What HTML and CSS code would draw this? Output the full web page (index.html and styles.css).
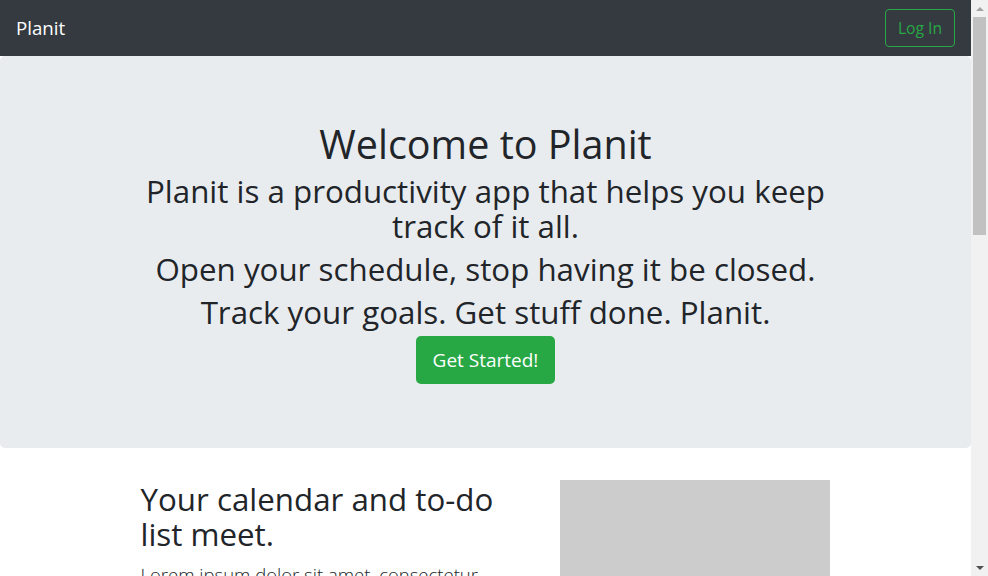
FILE: index.html
```html
<!DOCTYPE html>
<html lang="en">
<head>
<meta charset="utf-8">
<title>Planit</title>
<link rel="stylesheet" href="styles.css">
</head>
<body>
<div class="window">
  <div class="page">
    <nav class="navbar">
      <a class="brand" href="#">Planit</a>
      <a class="btn-outline" href="#">Log In</a>
    </nav>
    <section class="jumbotron">
      <h1 class="title">Welcome to Planit</h1>
      <h2 class="sub">Planit is a productivity app that helps you keep track of it all.</h2>
      <h2 class="sub">Open your schedule, stop having it be closed.</h2>
      <h2 class="sub">Track your goals. Get stuff done. Planit.</h2>
      <a class="btn-lg" href="#">Get Started!</a>
    </section>
    <div class="container">
      <div class="row">
        <div class="col-left">
          <h2 class="feature-heading">Your calendar and to-do list meet.</h2>
          <p class="lead">Lorem ipsum dolor sit amet, consectetur adipiscing elit, sed do eiusmod tempor incididunt ut labore et dolore magna aliqua.</p>
        </div>
        <div class="col-right">
          <div class="placeholder"></div>
        </div>
      </div>
    </div>
  </div>
  <div class="scrollbar">
    <div class="sb-btn"><span class="arrow-up"></span></div>
    <div class="sb-track"><div class="sb-thumb"></div></div>
    <div class="sb-btn"><span class="arrow-down"></span></div>
  </div>
</div>
</body>
</html>
```
FILE: styles.css
```css
html, body {
  margin: 0;
  padding: 0;
  height: 100%;
  overflow: hidden;
}
body {
  font-family: "Open Sans", "Noto Sans", sans-serif;
  color: #212529;
  background: #fff;
  font-size: 16px;
  line-height: 1.5;
}
.window {
  display: flex;
  height: 576px;
  width: 988px;
}
.page {
  flex: 1;
  min-width: 0;
  overflow: hidden;
}
.navbar {
  background: #343a40;
  height: 56px;
  box-sizing: border-box;
  padding: 0 16px;
  display: flex;
  align-items: center;
  justify-content: space-between;
}
.brand {
  color: #fff;
  text-decoration: none;
  font-size: 18.7px;
  line-height: 30px;
}
.btn-outline {
  color: #28a745;
  border: 1px solid #28a745;
  border-radius: 4px;
  text-decoration: none;
  font-size: 15.7px;
  line-height: 24px;
  padding: 6px 0;
  width: 70px;
  box-sizing: border-box;
  white-space: nowrap;
  text-align: center;
}
.jumbotron {
  background: #e9ecef;
  border-radius: 5px;
  padding: 64px 32px;
  margin-bottom: 32px;
  text-align: center;
  height: 392px;
  box-sizing: border-box;
}
.title {
  font-size: 39.5px;
  font-weight: 400;
  line-height: 48px;
  margin: 0 0 6px;
}
.sub {
  font-size: 31.3px;
  font-weight: 400;
  line-height: 35px;
  margin: 0 auto 8px;
  max-width: 690px;
}
.btn-lg {
  display: inline-block;
  background: #28a745;
  color: #fff;
  text-decoration: none;
  font-size: 19px;
  line-height: 30px;
  padding: 9px 17px;
  border-radius: 5px;
  margin-top: -2px;
}
.container {
  width: 720px;
  margin: 0 auto;
  padding: 0 15px;
  box-sizing: border-box;
}
.row {
  display: flex;
  margin: 0 -15px;
}
.col-left {
  flex: 0 0 58.3333%;
  padding: 0 15px;
  box-sizing: border-box;
}
.col-right {
  flex: 0 0 41.6667%;
  padding: 0 15px;
  box-sizing: border-box;
  display: flex;
  justify-content: flex-end;
}
.feature-heading {
  font-size: 31.3px;
  font-weight: 400;
  line-height: 35px;
  margin: 2px 0 8px;
}
.lead {
  font-size: 18.5px;
  font-weight: 300;
  line-height: 30px;
  margin: 0;
}
.placeholder {
  width: 270px;
  height: 270px;
  background: #cccccc;
}
.scrollbar {
  width: 17px;
  background: #f1f1f1;
  display: flex;
  flex-direction: column;
}
.sb-btn {
  height: 17px;
  display: flex;
  align-items: center;
  justify-content: center;
}
.sb-track {
  flex: 1;
}
.sb-thumb {
  margin: 0 2px;
  height: 218px;
  background: #c1c1c1;
}
.arrow-up {
  width: 0;
  height: 0;
  border-left: 4px solid transparent;
  border-right: 4px solid transparent;
  border-bottom: 4px solid #a3a3a3;
}
.arrow-down {
  width: 0;
  height: 0;
  border-left: 4px solid transparent;
  border-right: 4px solid transparent;
  border-top: 4px solid #505050;
}
```
